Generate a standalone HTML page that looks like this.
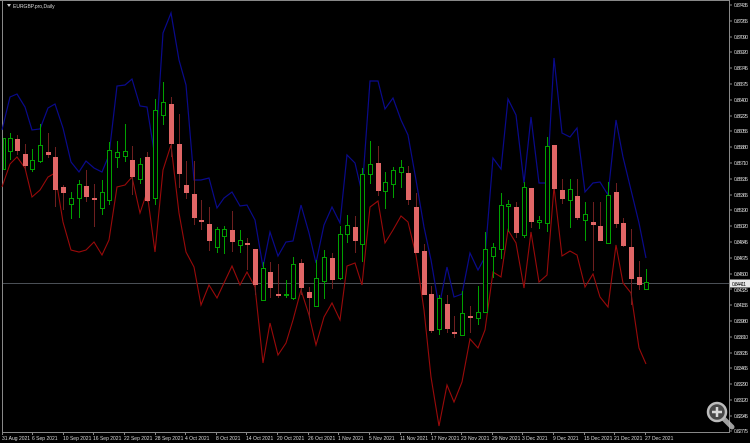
<!DOCTYPE html>
<html><head><meta charset="utf-8"><style>
html,body{margin:0;padding:0;background:#000;width:750px;height:443px;overflow:hidden}
svg{display:block}
text{font-family:"Liberation Sans",sans-serif;font-size:5px;fill:#d8d8d8}
.p text{font-size:5px}
</style></head><body>
<svg width="750" height="443" viewBox="0 0 750 443" xmlns="http://www.w3.org/2000/svg">
<rect width="750" height="443" fill="#000"/>
<line x1="0" y1="0.5" x2="729" y2="0.5" stroke="#888"/>
<line x1="2.5" y1="0" x2="2.5" y2="432" stroke="#888"/>
<line x1="729.5" y1="0" x2="729.5" y2="432" stroke="#888"/>
<line x1="2" y1="432.5" x2="730" y2="432.5" stroke="#888"/>
<line x1="3" y1="283.5" x2="729" y2="283.5" stroke="#4a4f55"/>
<polygon points="7,4 11,4 9,7" fill="#ccc"/>
<text x="13" y="8" style="font-size:5px">EURGBP.pro,Daily</text>

<polyline fill="none" stroke="#0a0a8c" stroke-width="1.2" points="2,130 10,97 17,94 25,107 32,130 40,129 48,108 55,104 63,128 71,162 79,172 86,161 94,168 102,172 109,155 117,86 125,85 132,79 140,106 147,107 155,157 163,33 171,13 179,60 186,85 194,180 201,180 209,178 217,208 224,198 232,192 240,206 247,205 255,220 263,267 270,232 278,256 286,242 293,241 301,205 309,233 316,263 324,225 332,207 340,223 347,155 355,163 362,193 370,81 378,81 385,109 393,98 401,120 408,135 416,180 424,227 431,260 439,307 447,267 454,297 462,294 470,253 478,270 485,257 493,158 501,169 508,99 516,115 524,183 531,117 539,183 547,183 554,58 562,133 570,137 577,128 585,192 593,183 600,182 608,195 616,120 623,157 631,190 639,223 646,258"/>
<polyline fill="none" stroke="#9a0a0a" stroke-width="1.1" points="2,187 10,164 17,157 25,168 32,197 40,190 48,177 55,173 63,222 71,250 79,252 86,250 94,242 102,255 109,240 117,187 125,185 132,177 140,213 147,192 155,252 163,170 171,145 179,213 186,252 194,267 201,305 209,285 217,298 224,283 232,266 240,285 247,272 255,287 263,363 270,323 278,355 286,343 293,320 301,290 309,315 316,345 324,317 332,303 340,320 347,266 355,263 362,285 370,207 378,201 385,243 393,230 401,216 408,222 416,255 424,310 431,377 439,426 447,385 454,402 462,382 470,339 478,348 485,330 493,272 501,277 508,230 516,243 524,288 531,232 539,282 547,275 554,187 562,256 570,251 577,255 585,287 593,274 600,297 608,307 616,245 623,283 631,293 639,348 646,364"/>

<g shape-rendering="crispEdges">
<path stroke="#00a000" fill="none" d="M10.5 133V160M32.5 149V172M40.5 124V163M71.5 192V219M79.5 180V218M102.5 180V215M109.5 142V205M117.5 141V168M125.5 124V162M140.5 158V184M155.5 99V205M163.5 82V125M217.5 227V253M224.5 226V254M240.5 230V253M263.5 262V301M286.5 280V298M293.5 257V300M316.5 260V306M324.5 250V299M340.5 226V280M347.5 215V243M362.5 168V262M370.5 141V184M385.5 172V209M393.5 167V198M401.5 160V188M439.5 295V335M462.5 291V335M478.5 286V325M485.5 232V312M493.5 243V278M501.5 193V259M508.5 200V232M524.5 182V238M539.5 216V229M547.5 137V232M570.5 179V228M585.5 202V241M608.5 182V243M646.5 269V289"/>
<path stroke="#6e1f1f" fill="none" d="M17.5 135V155M25.5 144V170M48.5 133V158M55.5 147V207M63.5 185V210M86.5 170V202M94.5 184V227M132.5 146V195M147.5 152V202M171.5 97V157M179.5 114V188M186.5 161V199M194.5 161V225M201.5 200V230M209.5 207V251M232.5 211V252M247.5 238V270M255.5 249V295M270.5 262V298M278.5 264V298M301.5 259V295M309.5 287V318M332.5 253V289M355.5 216V253M378.5 146V196M408.5 166V205M416.5 193V253M424.5 244V295M431.5 286V333M447.5 295V333M454.5 316V338M470.5 306V333M516.5 202V238M531.5 188V228M554.5 145V190M562.5 179V204M577.5 179V220M593.5 202V271M600.5 202V241M616.5 183V228M623.5 218V247M631.5 229V305M639.5 261V290"/>
<g fill="#000" stroke="#00a000">
<rect x="3.5" y="138.5" width="2" height="31"/>
<rect x="8.5" y="138.5" width="4" height="13"/>
<rect x="30.5" y="160.5" width="4" height="9"/>
<rect x="38.5" y="145.5" width="4" height="16"/>
<rect x="69.5" y="198.5" width="4" height="6"/>
<rect x="77.5" y="184.5" width="4" height="14"/>
<rect x="100.5" y="192.5" width="4" height="16"/>
<rect x="107.5" y="150.5" width="4" height="50"/>
<rect x="115.5" y="152.5" width="4" height="5"/>
<rect x="123.5" y="151.5" width="4" height="5"/>
<rect x="138.5" y="164.5" width="4" height="15"/>
<rect x="153.5" y="110.5" width="4" height="88"/>
<rect x="161.5" y="102.5" width="4" height="13"/>
<rect x="215.5" y="229.5" width="4" height="18"/>
<rect x="222.5" y="229.5" width="4" height="7"/>
<rect x="238.5" y="240.5" width="4" height="5"/>
<rect x="261.5" y="268.5" width="4" height="32"/>
<rect x="284.5" y="294.5" width="4" height="1"/>
<rect x="291.5" y="264.5" width="4" height="34"/>
<rect x="314.5" y="278.5" width="4" height="28"/>
<rect x="322.5" y="257.5" width="4" height="24"/>
<rect x="338.5" y="234.5" width="4" height="44"/>
<rect x="345.5" y="225.5" width="4" height="9"/>
<rect x="360.5" y="174.5" width="4" height="70"/>
<rect x="368.5" y="164.5" width="4" height="10"/>
<rect x="383.5" y="182.5" width="4" height="9"/>
<rect x="391.5" y="170.5" width="4" height="14"/>
<rect x="399.5" y="167.5" width="4" height="5"/>
<rect x="437.5" y="298.5" width="4" height="31"/>
<rect x="460.5" y="313.5" width="4" height="22"/>
<rect x="476.5" y="312.5" width="4" height="6"/>
<rect x="483.5" y="249.5" width="4" height="63"/>
<rect x="491.5" y="247.5" width="4" height="9"/>
<rect x="499.5" y="205.5" width="4" height="44"/>
<rect x="506.5" y="204.5" width="4" height="2"/>
<rect x="522.5" y="187.5" width="4" height="48"/>
<rect x="537.5" y="220.5" width="4" height="2"/>
<rect x="545.5" y="146.5" width="4" height="77"/>
<rect x="568.5" y="189.5" width="4" height="11"/>
<rect x="583.5" y="214.5" width="4" height="6"/>
<rect x="606.5" y="195.5" width="4" height="48"/>
<rect x="644.5" y="282.5" width="4" height="7"/>
</g>
<g fill="#e06666">
<rect x="15" y="139" width="5" height="12"/>
<rect x="23" y="154" width="5" height="12"/>
<rect x="46" y="152" width="5" height="3"/>
<rect x="53" y="157" width="5" height="33"/>
<rect x="61" y="187" width="5" height="6"/>
<rect x="84" y="186" width="5" height="11"/>
<rect x="92" y="198" width="5" height="2"/>
<rect x="130" y="160" width="5" height="17"/>
<rect x="145" y="157" width="5" height="44"/>
<rect x="169" y="104" width="5" height="40"/>
<rect x="177" y="144" width="5" height="30"/>
<rect x="184" y="185" width="5" height="8"/>
<rect x="192" y="194" width="5" height="24"/>
<rect x="199" y="220" width="5" height="2"/>
<rect x="207" y="224" width="5" height="17"/>
<rect x="230" y="230" width="5" height="12"/>
<rect x="245" y="243" width="5" height="2"/>
<rect x="253" y="249" width="5" height="36"/>
<rect x="268" y="272" width="5" height="16"/>
<rect x="276" y="294" width="5" height="2"/>
<rect x="299" y="263" width="5" height="25"/>
<rect x="307" y="292" width="5" height="6"/>
<rect x="330" y="258" width="5" height="22"/>
<rect x="353" y="227" width="5" height="14"/>
<rect x="376" y="163" width="5" height="28"/>
<rect x="406" y="173" width="5" height="27"/>
<rect x="414" y="207" width="5" height="46"/>
<rect x="422" y="251" width="5" height="44"/>
<rect x="429" y="294" width="5" height="37"/>
<rect x="445" y="304" width="5" height="25"/>
<rect x="452" y="332" width="5" height="2"/>
<rect x="468" y="316" width="5" height="2"/>
<rect x="514" y="207" width="5" height="26"/>
<rect x="529" y="188" width="5" height="34"/>
<rect x="552" y="145" width="5" height="44"/>
<rect x="560" y="190" width="5" height="9"/>
<rect x="575" y="196" width="5" height="22"/>
<rect x="591" y="222" width="5" height="3"/>
<rect x="598" y="226" width="5" height="15"/>
<rect x="614" y="192" width="5" height="32"/>
<rect x="621" y="223" width="5" height="23"/>
<rect x="629" y="247" width="5" height="32"/>
<rect x="637" y="277" width="5" height="8"/>
</g>
</g>

<g stroke="#888">
<path d="M729 5h3M729 21h3M729 37h3M729 52h3M729 68h3M729 84h3M729 100h3M729 116h3M729 131h3M729 147h3M729 163h3M729 179h3M729 195h3M729 210h3M729 226h3M729 242h3M729 258h3M729 274h3M729 289h3M729 305h3M729 321h3M729 337h3M729 353h3M729 368h3M729 384h3M729 400h3M729 416h3M729 431h3"/>
<path d="M2.5 432v3M32.5 432v3M63.5 432v3M93.5 432v3M124.5 432v3M155.5 432v3M185.5 432v3M216.5 432v3M246.5 432v3M277.5 432v3M308.5 432v3M338.5 432v3M369.5 432v3M400.5 432v3M431.5 432v3M461.5 432v3M492.5 432v3M522.5 432v3M553.5 432v3M584.5 432v3M614.5 432v3M645.5 432v3"/>
</g>
<g class="p">
<text x="734" y="7" textLength="14">0.87435</text><text x="734" y="23" textLength="14">0.87265</text><text x="734" y="39" textLength="14">0.87090</text><text x="734" y="54" textLength="14">0.86920</text><text x="734" y="70" textLength="14">0.86745</text><text x="734" y="86" textLength="14">0.86575</text><text x="734" y="102" textLength="14">0.86400</text><text x="734" y="118" textLength="14">0.86225</text><text x="734" y="133" textLength="14">0.86055</text><text x="734" y="149" textLength="14">0.85880</text><text x="734" y="165" textLength="14">0.85710</text><text x="734" y="181" textLength="14">0.85535</text><text x="734" y="197" textLength="14">0.85365</text><text x="734" y="212" textLength="14">0.85190</text><text x="734" y="228" textLength="14">0.85020</text><text x="734" y="244" textLength="14">0.84845</text><text x="734" y="260" textLength="14">0.84675</text><text x="734" y="276" textLength="14">0.84500</text><text x="734" y="292" textLength="14">0.84325</text><text x="734" y="307" textLength="14">0.84155</text><text x="734" y="323" textLength="14">0.83980</text><text x="734" y="339" textLength="14">0.83810</text><text x="734" y="355" textLength="14">0.83635</text><text x="734" y="370" textLength="14">0.83465</text><text x="734" y="386" textLength="14">0.83290</text><text x="734" y="402" textLength="14">0.83120</text><text x="734" y="418" textLength="14">0.82945</text><text x="734" y="433" textLength="14">0.82775</text>
</g>
<rect x="730" y="279.5" width="20" height="8" fill="#e8e8e8"/>
<text x="732" y="286" textLength="14" style="fill:#000">0.84411</text>
<g>
<text x="2" y="440">31 Aug 2021</text><text x="32" y="440">6 Sep 2021</text><text x="63" y="440">10 Sep 2021</text><text x="93" y="440">16 Sep 2021</text><text x="124" y="440">22 Sep 2021</text><text x="155" y="440">28 Sep 2021</text><text x="185" y="440">4 Oct 2021</text><text x="216" y="440">8 Oct 2021</text><text x="246" y="440">14 Oct 2021</text><text x="277" y="440">20 Oct 2021</text><text x="308" y="440">26 Oct 2021</text><text x="338" y="440">1 Nov 2021</text><text x="369" y="440">5 Nov 2021</text><text x="400" y="440">11 Nov 2021</text><text x="431" y="440">17 Nov 2021</text><text x="461" y="440">23 Nov 2021</text><text x="492" y="440">29 Nov 2021</text><text x="522" y="440">3 Dec 2021</text><text x="553" y="440">9 Dec 2021</text><text x="584" y="440">15 Dec 2021</text><text x="614" y="440">21 Dec 2021</text><text x="645" y="440">27 Dec 2021</text>
</g>
<g opacity="0.85">
<line x1="723" y1="418" x2="732" y2="427" stroke="#bbb" stroke-width="5" stroke-linecap="round"/>
<circle cx="717" cy="412" r="9" fill="#555" stroke="#ddd" stroke-width="2.5"/>
<path d="M717 407v10M712 412h10" stroke="#fff" stroke-width="2.5"/>
</g>
</svg>
</body></html>
